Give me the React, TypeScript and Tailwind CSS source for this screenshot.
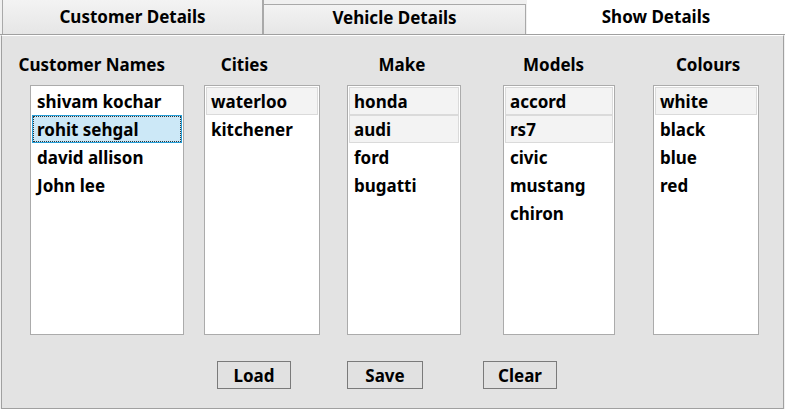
import { useState } from "react";

const font = { fontFamily: '"Noto Sans", "Open Sans", sans-serif' };

type Col = {
  title: string;
  headerMl: string;
  boxMl: string;
  boxW: string;
  items: string[];
  hot: number[];
};

const columns: Col[] = [
  { title: "Customer Names", headerMl: "ml-[15px]", boxMl: "ml-[28px]", boxW: "w-[154px]", items: ["shivam kochar", "rohit sehgal", "david allison", "John lee"], hot: [] },
  { title: "Cities", headerMl: "ml-[3px]", boxMl: "ml-[20px]", boxW: "w-[116px]", items: ["waterloo", "kitchener"], hot: [0] },
  { title: "Make", headerMl: "ml-[8px]", boxMl: "ml-[27px]", boxW: "w-[114px]", items: ["honda", "audi", "ford", "bugatti"], hot: [0, 1] },
  { title: "Models", headerMl: "ml-[2px]", boxMl: "ml-[42px]", boxW: "w-[112px]", items: ["accord", "rs7", "civic", "mustang", "chiron"], hot: [0, 1] },
  { title: "Colours", headerMl: "ml-[5px]", boxMl: "ml-[38px]", boxW: "w-[106px]", items: ["white", "black", "blue", "red"], hot: [0] },
];

function ListBox({ col, selected, onPick }: { col: Col; selected: string | null; onPick: (s: string) => void }) {
  return (
    <div className={`${col.boxMl} ${col.boxW} h-[250px] border border-[#ababab] bg-white p-px`}>
      {col.items.map((it, i) => {
        const isSel = selected === it;
        const isHot = col.hot.includes(i);
        return (
          <div
            key={it}
            onClick={() => onPick(it)}
            className={`h-[28px] border ${
              isSel
                ? "border-[#26a0da] bg-[#cce8f7]"
                : isHot
                ? "border-[#dadada] bg-[#f3f3f3]"
                : "border-transparent"
            }`}
          >
            <div
              className={`flex h-full items-center pl-[4px] pt-px text-[17px] font-bold text-black ${
                isSel ? "outline outline-1 outline-dotted outline-offset-[-1px] outline-[#333]" : ""
              }`}
            >
              {it}
            </div>
          </div>
        );
      })}
    </div>
  );
}

export default function App() {
  const [sel, setSel] = useState<string | null>("rohit sehgal");

  return (
    <div style={font} className="flex h-[409px] w-[785px] flex-col overflow-hidden bg-[#f0f0f0]">
      {/* tab strip */}
      <div className="flex h-[35px] shrink-0 border-b border-[#a0a0a0]">
        <div className="ml-[2px] flex w-[262px] items-center justify-center border-l border-r-2 border-[#a9a9a9] bg-gradient-to-b from-[#f3f3f3] to-[#e6e6e6] text-[17px] font-bold text-black">
          Customer Details
        </div>
        <div className="mt-[4px] flex w-[262px] items-center justify-center border-t border-r border-[#a9a9a9] bg-gradient-to-b from-[#f3f3f3] to-[#e6e6e6] pb-[4px] text-[17px] font-bold text-black">
          Vehicle Details
        </div>
        <div className="ml-px flex flex-1 items-center justify-center bg-white text-[17px] font-bold text-black">
          Show Details
        </div>
      </div>

      {/* panel */}
      <div className="ml-px flex h-[374px] w-[783px] flex-col border-x border-b border-t border-[#a0a0a0] border-t-white bg-[#e3e3e3]">
        <div className="mt-[19px] flex h-[20px] items-center text-[17px] font-bold text-black">
          {columns.map((c) => (
            <div key={c.title} className={`${c.headerMl} flex w-[150px] justify-center whitespace-nowrap`}>
              {c.title}
            </div>
          ))}
        </div>

        <div className="mt-[10px] flex">
          {columns.map((c) => (
            <ListBox key={c.title} col={c} selected={c.title === "Customer Names" ? sel : null} onPick={(s) => c.title === "Customer Names" && setSel(s)} />
          ))}
        </div>

        <div className="mt-[26px] flex">
          <button className="ml-[215px] h-[28px] w-[74px] border border-[#7a7a7a] bg-[#e1e1e1] pt-px text-[17px] font-bold text-black">
            Load
          </button>
          <button className="ml-[56px] h-[28px] w-[76px] border border-[#7a7a7a] bg-[#e1e1e1] pt-px text-[17px] font-bold text-black">
            Save
          </button>
          <button className="ml-[60px] h-[28px] w-[74px] border border-[#7a7a7a] bg-[#e1e1e1] pt-px text-[17px] font-bold text-black">
            Clear
          </button>
        </div>
      </div>
    </div>
  );
}
